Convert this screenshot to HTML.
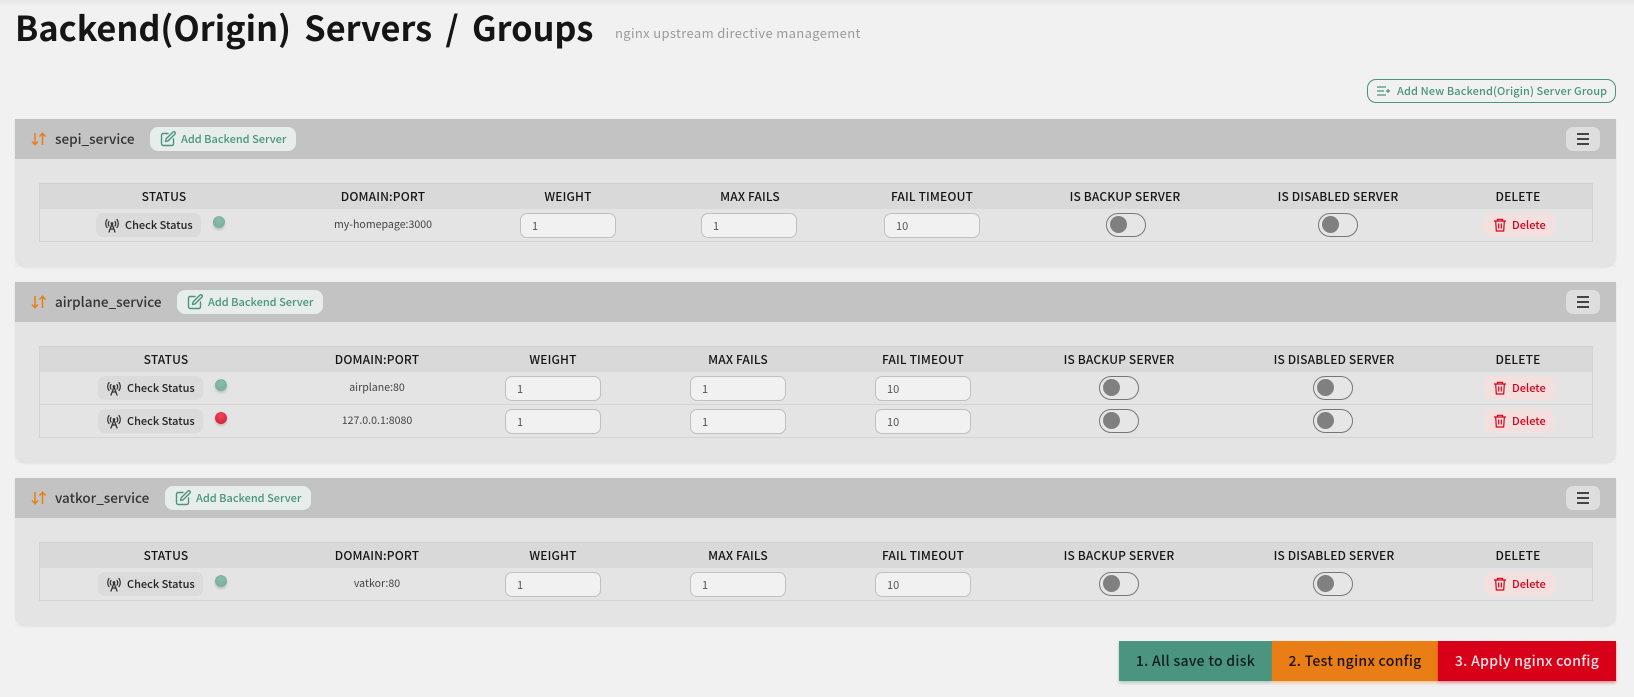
<!DOCTYPE html>
<html><head><meta charset="utf-8"><style>
html,body{margin:0;padding:0}
body{width:1634px;height:697px;overflow:hidden;position:relative;background:#f1f1f1;font-family:"Noto Sans CJK KR","Liberation Sans",sans-serif;color:#222}
.a{position:absolute;white-space:nowrap}
#top{position:absolute;left:0;top:0;width:1634px;height:6px;background:linear-gradient(#e6e6e6,#f1f1f1)}
h1{position:absolute;left:15px;top:0;margin:0;font-size:34.3px;line-height:52px;font-weight:700;color:#151515;word-spacing:5.5px;white-space:nowrap}
#sub{left:615px;top:23px;font-size:13px;line-height:20px;color:#9b9b9b;letter-spacing:.35px}
#grp{left:1367px;top:79px;width:247px;height:22px;border:1px solid #4a9480;border-radius:9px}
#grp span{position:absolute;left:29px;top:0;font-size:11px;line-height:22px;font-weight:500;color:#4a9480;letter-spacing:.1px}
#grp svg{position:absolute;left:9px;top:5px}
.p{position:absolute;left:15px;width:1601px;background:#ececec}
.p::before{content:"";position:absolute;left:0;top:0;right:0;bottom:0;background:#e4e4e4;border-radius:0 0 13px 13px;box-shadow:0 1px 2px rgba(0,0,0,.07)}
.h{position:absolute;left:0;top:0;width:1601px;height:40px;background:#c3c3c3}
.n{position:absolute;left:40px;top:8px;font-size:13.5px;line-height:22px;font-weight:500;color:#333;white-space:nowrap}
.s{position:absolute;left:16px;top:13px}
.ad{position:absolute;top:8px;width:146px;height:24px;background:#e6edea;border-radius:8px}
.ad span{position:absolute;left:31px;top:0;font-size:11px;line-height:24px;font-weight:500;color:#4a9480;white-space:nowrap}
.ad svg{position:absolute;left:10px;top:4px}
.m{position:absolute;left:1551px;top:8px;width:34px;height:24px;background:#dedede;border-radius:7px}
.m i{position:absolute;left:11px;width:12px;height:2px;background:#444}
.th{position:absolute;left:24px;width:1552px;height:25px;top:64px;background:#d9d9d9;border-top:1px solid #d0d0d0;border-left:1px solid #d6d6d6;border-right:1px solid #d6d6d6;box-sizing:content-box}
.t{position:absolute;top:65px;font-size:12px;line-height:25px;font-weight:500;color:#151515;white-space:nowrap;transform:translateX(-50%);letter-spacing:.15px}
.l{position:absolute;left:24px;width:1554px;height:1px;background:#d4d4d4}
.v{position:absolute;left:24px;width:1px;background:#d4d4d4}
.cb{position:absolute;width:105px;height:24px;background:#dbdbdb;border-radius:7px}
.cb span{position:absolute;left:29px;top:0;font-size:11px;line-height:24px;font-weight:500;color:#222;white-space:nowrap}
.cb svg{position:absolute;left:8px;top:4px}
.dot{position:absolute;width:12px;height:12px;border-radius:50%;background:radial-gradient(circle at 50% 35%,#8cbcae,#70aa98);box-shadow:0 2px 2px rgba(0,0,0,.16)}
.dot.e{background:radial-gradient(circle at 50% 35%,#ea4a5e,#d9122c)}
.d{position:absolute;font-size:10.6px;line-height:24px;color:#444;white-space:nowrap;transform:translateX(-50%)}
.in{position:absolute;width:94px;height:23px;background:#f1f1f1;border:1px solid #c0c0c0;border-radius:7px;font-size:11px;line-height:24px;color:#555;text-indent:11px}
.tg{position:absolute;width:38px;height:22px;border:1px solid #777;border-radius:12px;background:#e6e6e6}
.tg i{position:absolute;left:3px;top:2px;width:17px;height:17px;border-radius:50%;background:#808080}
.del{position:absolute;left:1469px;width:71px;height:24px;background:#f4dfdf;border-radius:8px}
.del span{position:absolute;left:28px;top:0;font-size:11px;line-height:24px;color:#d70018;font-weight:500;white-space:nowrap}
.del svg{position:absolute;left:9px;top:5px}
.b{position:absolute;top:641px;height:40px;font-size:14px;line-height:40px;font-weight:500;text-align:center;white-space:nowrap;letter-spacing:.3px}
</style></head><body>
<svg width="0" height="0" style="position:absolute"><defs>
<symbol id="ed" viewBox="0 0 16 16"><path d="M8 2.5H3.2A1.7 1.7 0 0 0 1.5 4.2v8.6a1.7 1.7 0 0 0 1.7 1.7h8.6a1.7 1.7 0 0 0 1.7-1.7V8M5.5 10.5l.6-2.6L12.9 1.1a1.3 1.3 0 0 1 2 2L8.1 9.9z" fill="none" stroke="#4a9480" stroke-width="1.4" stroke-linejoin="round" stroke-linecap="round"/></symbol>
<symbol id="so" viewBox="0 0 16 14"><path d="M4 1v11.5M1 9.5l3 3.2 3-3.2M11.5 13V1.5M8.5 4.5l3-3.2 3 3.2" fill="none" stroke="#e97e16" stroke-width="1.5"/></symbol>
<symbol id="an" viewBox="0 0 16 16"><g fill="none" stroke="#333" stroke-width="1.3" stroke-linecap="round"><path d="M3 2.5a7 7 0 0 0 0 8M13 2.5a7 7 0 0 1 0 8M5 4.5a4 4 0 0 0 0 4.5M11 4.5a4 4 0 0 1 0 4.5"/><path d="M8 7l-3 8M8 7l3 8M6.3 12h3.4"/></g><circle cx="8" cy="6.5" r="1.4" fill="#333"/></symbol>
<symbol id="tr" viewBox="0 0 14 14"><g fill="none" stroke="#d70018" stroke-width="1.2"><path d="M1 3h12M4.5 3V1.3h5V3M2.7 3l.6 10h7.4l.6-10M5.7 5.5v5M8.3 5.5v5"/></g></symbol>
</defs></svg>
<div id="top"></div>
<h1>Backend(Origin) Servers / Groups</h1>
<div class="a" id="sub">nginx upstream directive management</div>
<div class="a" id="grp"><svg width="13" height="12" viewBox="0 0 13 12"><path d="M0 2h9M0 6h7M0 10h9M9 6h4M11 4v4" fill="none" stroke="#4a9480" stroke-width="1.2"/></svg><span>Add New Backend(Origin) Server Group</span></div>

<!-- Panel 1 -->
<div class="p" style="top:119px;height:148px">
<div class="h"></div><svg class="s" width="16" height="14"><use href="#so"/></svg>
<div class="n">sepi_service</div>
<div class="ad" style="left:135px"><svg width="16" height="16"><use href="#ed"/></svg><span>Add Backend Server</span></div>
<div class="m"><i style="top:6px"></i><i style="top:11px"></i><i style="top:16px"></i></div>
<div class="th"></div><div class="v" style="top:64px;height:58px"></div><div class="v" style="left:1577px;top:64px;height:58px"></div>
<div class="t" style="left:149px">STATUS</div><div class="t" style="left:368px">DOMAIN:PORT</div><div class="t" style="left:553px">WEIGHT</div><div class="t" style="left:735px">MAX FAILS</div><div class="t" style="left:917px">FAIL TIMEOUT</div><div class="t" style="left:1110px">IS BACKUP SERVER</div><div class="t" style="left:1323px">IS DISABLED SERVER</div><div class="t" style="left:1503px">DELETE</div>
<div class="cb" style="left:81px;top:94px"><svg width="16" height="16"><use href="#an"/></svg><span>Check Status</span></div>
<div class="dot" style="left:198px;top:97px"></div>
<div class="d" style="left:368px;top:94px">my-homepage:3000</div>
<div class="in" style="left:505px;top:94px">1</div><div class="in" style="left:686px;top:94px">1</div><div class="in" style="left:869px;top:94px">10</div>
<div class="tg" style="left:1091px;top:94px"><i></i></div><div class="tg" style="left:1303px;top:94px"><i></i></div>
<div class="del" style="top:94px"><svg width="14" height="14"><use href="#tr"/></svg><span>Delete</span></div>
<div class="l" style="top:122px"></div>
</div>

<!-- Panel 2 -->
<div class="p" style="top:282px;height:181px">
<div class="h"></div><svg class="s" width="16" height="14"><use href="#so"/></svg>
<div class="n">airplane_service</div>
<div class="ad" style="left:162px"><svg width="16" height="16"><use href="#ed"/></svg><span>Add Backend Server</span></div>
<div class="m"><i style="top:6px"></i><i style="top:11px"></i><i style="top:16px"></i></div>
<div class="th"></div><div class="v" style="top:64px;height:92px"></div><div class="v" style="left:1577px;top:64px;height:92px"></div>
<div class="t" style="left:151px">STATUS</div><div class="t" style="left:362px">DOMAIN:PORT</div><div class="t" style="left:538px">WEIGHT</div><div class="t" style="left:723px">MAX FAILS</div><div class="t" style="left:908px">FAIL TIMEOUT</div><div class="t" style="left:1104px">IS BACKUP SERVER</div><div class="t" style="left:1319px">IS DISABLED SERVER</div><div class="t" style="left:1503px">DELETE</div>
<div class="cb" style="left:83px;top:94px"><svg width="16" height="16"><use href="#an"/></svg><span>Check Status</span></div>
<div class="dot" style="left:200px;top:97px"></div>
<div class="d" style="left:362px;top:94px">airplane:80</div>
<div class="in" style="left:490px;top:94px">1</div><div class="in" style="left:675px;top:94px">1</div><div class="in" style="left:860px;top:94px">10</div>
<div class="tg" style="left:1084px;top:94px"><i></i></div><div class="tg" style="left:1298px;top:94px"><i></i></div>
<div class="del" style="top:94px"><svg width="14" height="14"><use href="#tr"/></svg><span>Delete</span></div>
<div class="l" style="top:122px"></div>
<div class="cb" style="left:83px;top:127px"><svg width="16" height="16"><use href="#an"/></svg><span>Check Status</span></div>
<div class="dot e" style="left:200px;top:130px"></div>
<div class="d" style="left:362px;top:127px">127.0.0.1:8080</div>
<div class="in" style="left:490px;top:127px">1</div><div class="in" style="left:675px;top:127px">1</div><div class="in" style="left:860px;top:127px">10</div>
<div class="tg" style="left:1084px;top:127px"><i></i></div><div class="tg" style="left:1298px;top:127px"><i></i></div>
<div class="del" style="top:127px"><svg width="14" height="14"><use href="#tr"/></svg><span>Delete</span></div>
<div class="l" style="top:155px"></div>
</div>

<!-- Panel 3 -->
<div class="p" style="top:478px;height:148px">
<div class="h"></div><svg class="s" width="16" height="14"><use href="#so"/></svg>
<div class="n">vatkor_service</div>
<div class="ad" style="left:150px"><svg width="16" height="16"><use href="#ed"/></svg><span>Add Backend Server</span></div>
<div class="m"><i style="top:6px"></i><i style="top:11px"></i><i style="top:16px"></i></div>
<div class="th"></div><div class="v" style="top:64px;height:58px"></div><div class="v" style="left:1577px;top:64px;height:58px"></div>
<div class="t" style="left:151px">STATUS</div><div class="t" style="left:362px">DOMAIN:PORT</div><div class="t" style="left:538px">WEIGHT</div><div class="t" style="left:723px">MAX FAILS</div><div class="t" style="left:908px">FAIL TIMEOUT</div><div class="t" style="left:1104px">IS BACKUP SERVER</div><div class="t" style="left:1319px">IS DISABLED SERVER</div><div class="t" style="left:1503px">DELETE</div>
<div class="cb" style="left:83px;top:94px"><svg width="16" height="16"><use href="#an"/></svg><span>Check Status</span></div>
<div class="dot" style="left:200px;top:97px"></div>
<div class="d" style="left:362px;top:94px">vatkor:80</div>
<div class="in" style="left:490px;top:94px">1</div><div class="in" style="left:675px;top:94px">1</div><div class="in" style="left:860px;top:94px">10</div>
<div class="tg" style="left:1084px;top:94px"><i></i></div><div class="tg" style="left:1298px;top:94px"><i></i></div>
<div class="del" style="top:94px"><svg width="14" height="14"><use href="#tr"/></svg><span>Delete</span></div>
<div class="l" style="top:122px"></div>
</div>

<div class="b" style="left:1119px;width:153px;background:#4a9480;color:#0e1d1a;box-shadow:0 2px 3px rgba(74,148,128,.4)">1. All save to disk</div>
<div class="b" style="left:1272px;width:166px;background:#e97e16;color:#1a1005;box-shadow:0 2px 3px rgba(233,126,22,.4)">2. Test nginx config</div>
<div class="b" style="left:1438px;width:178px;background:#d70018;color:#fde4e8;box-shadow:0 2px 3px rgba(215,0,24,.4)">3. Apply nginx config</div>
</body></html>
